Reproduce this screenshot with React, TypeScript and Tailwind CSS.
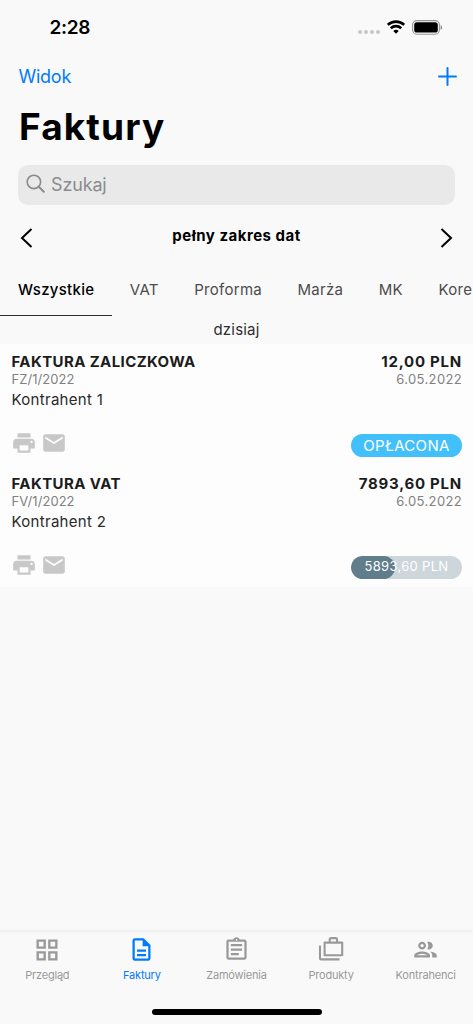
import type { ReactNode } from 'react';
import { MdEmail, MdOutlineAssignment, MdOutlineDescription, MdOutlineGridView, MdPrint } from 'react-icons/md';

type Invoice = {
  title: string;
  number: string;
  client: string;
  amount: string;
  date: string;
  status: string;
  paidPercent?: number;
};

const INVOICES: Invoice[] = [
  {
    title: 'FAKTURA ZALICZKOWA',
    number: 'FZ/1/2022',
    client: 'Kontrahent 1',
    amount: '12,00 PLN',
    date: '6.05.2022',
    status: 'OPŁACONA',
  },
  {
    title: 'FAKTURA VAT',
    number: 'FV/1/2022',
    client: 'Kontrahent 2',
    amount: '7893,60 PLN',
    date: '6.05.2022',
    status: '5893,60 PLN',
    paidPercent: 40,
  },
];

const FILTERS = ['Wszystkie', 'VAT', 'Proforma', 'Marża', 'MK', 'Kore'];

function CasesIcon() {
  return (
    <svg width="27" height="27" viewBox="0 0 27 27" fill="none" stroke="currentColor" strokeWidth="2.1" strokeLinejoin="round">
      <path d="M6.6 6.6h17.6v12.6H6.600z" />
      <path d="M11.700 6.600V3.500q0-1.400 1.400-1.400h4.600q1.400 0 1.400 1.400v3.100" />
      <path d="M2 9.500v12.900q0 1 1 1h18.600" />
    </svg>
  );
}

function PeopleIcon() {
  return (
    <svg width="27" height="27" viewBox="0 0 24 24" fill="currentColor">
      <path d="M9 13.75c-2.34 0-7 1.17-7 3.5V19h14v-1.75c0-2.33-4.66-3.5-7-3.5zM4.34 17c.84-.58 2.87-1.25 4.66-1.25s3.82.67 4.66 1.25H4.34zM9 12c1.93 0 3.5-1.57 3.5-3.5S10.93 5 9 5 5.5 6.57 5.5 8.5 7.07 12 9 12zm0-5c.83 0 1.5.67 1.5 1.5S9.83 10 9 10s-1.5-.67-1.5-1.5S8.17 7 9 7z" />
      <path d="M16.04 13.81c1.16.84 1.96 1.96 1.96 3.44V19h4v-1.75c0-2.02-3.5-3.17-5.96-3.44zM15 12c1.93 0 3.5-1.57 3.5-3.5S16.93 5 15 5c-.54 0-1.04.13-1.5.35.63.89 1 1.98 1 3.15s-.37 2.26-1 3.15c.46.22.96.35 1.5.35z" />
    </svg>
  );
}

const NAV_ITEMS: { label: string; icon: ReactNode; active?: boolean }[] = [
  { label: 'Przegląd', icon: <MdOutlineGridView size={28} /> },
  { label: 'Faktury', icon: <MdOutlineDescription size={27} />, active: true },
  { label: 'Zamówienia', icon: <MdOutlineAssignment size={27} /> },
  { label: 'Produkty', icon: <CasesIcon /> },
  { label: 'Kontrahenci', icon: <PeopleIcon /> },
];

function StatusBar() {
  return (
    <div className="flex h-[54px] shrink-0 items-center pr-[31px] pl-[49.5px]">
      <span className="pt-[2px] text-[19px] font-semibold tracking-[-0.3px]">2:28</span>
      <div className="ml-auto flex items-center">
        <div className="mt-[10px] mr-[7px] flex gap-[2px]">
          <span className="size-1 rounded-full bg-[#c7c7c7]" />
          <span className="size-1 rounded-full bg-[#c7c7c7]" />
          <span className="size-1 rounded-full bg-[#c7c7c7]" />
          <span className="size-1 rounded-full bg-[#c7c7c7]" />
        </div>
        <svg width="18" height="14" viewBox="0 0 18 14" fill="none" stroke="#000" strokeWidth="2.6">
          <path d="M.8 4.9a11.8 11.8 0 0 1 16.4 0" />
          <path d="M3.8 8.2a7.5 7.5 0 0 1 10.4 0" />
          <path d="M9 13.7 6.3 11a3.9 3.9 0 0 1 5.4 0z" fill="#000" stroke="none" />
        </svg>
        <svg className="ml-[7px]" width="30" height="15" viewBox="0 0 30 15">
          <rect x=".6" y=".6" width="26.8" height="13.6" rx="4.2" fill="none" stroke="#000" strokeOpacity=".4" strokeWidth="1.1" />
          <rect x="2.2" y="2.2" width="23.6" height="10.4" rx="2.7" />
          <path d="M28.6 5.1q1.5.8 1.5 2.3t-1.5 2.3z" fillOpacity=".45" />
        </svg>
      </div>
    </div>
  );
}

function InvoiceRow({ invoice }: { invoice: Invoice }) {
  return (
    <div className="flex h-[121.5px] justify-between bg-[#fdfdfd] pt-[8px] pr-[11px] pl-[11.5px]">
      <div>
        <p className="text-[15px] leading-[20px] font-bold tracking-[0.4px] text-[#1c1c1c]">{invoice.title}</p>
        <p className="-mt-px text-[13px] leading-[16px] tracking-[0.05px] text-[#818181]">{invoice.number}</p>
        <p className="mt-[2px] text-[15px] leading-[22px] tracking-[0.3px] text-[#2a2a2a]">{invoice.client}</p>
        <div className="mt-[19px] -ml-[0.5px] flex gap-[4px] text-[#c8c8c8]">
          <MdPrint size={26} />
          <MdEmail size={26} />
        </div>
      </div>
      <div className="flex flex-col items-end">
        <p className="text-[15px] leading-[20px] font-bold tracking-[0.75px] text-[#1c1c1c]">{invoice.amount}</p>
        <p className="-mt-px text-[13px] leading-[16px] tracking-[0.35px] text-[#818181]">{invoice.date}</p>
        {invoice.paidPercent === undefined ? (
          <div className="mt-[47px] flex h-[23px] w-[111px] items-center justify-center rounded-full bg-[#42c0fb] pt-px text-[15px] tracking-[0.3px] text-white">
            {invoice.status}
          </div>
        ) : (
          <div className="relative mt-[47px] flex h-[23px] w-[111px] items-center justify-center overflow-hidden rounded-full bg-[#cdd6db] text-[13px] tracking-[0.3px] text-white">
            <div className="absolute inset-y-0 left-0 rounded-full bg-[#5f7d8b]" style={{ width: `${invoice.paidPercent}%` }} />
            <span className="relative">{invoice.status}</span>
          </div>
        )}
      </div>
    </div>
  );
}

export default function App() {
  return (
    <div className="flex h-[1024px] w-[473px] flex-col overflow-hidden bg-[#f9f9f9] font-['Inter','Noto_Sans',sans-serif] text-black">
      <StatusBar />

      <header className="shrink-0">
        <div className="flex h-[45px] items-center justify-between pr-[16px] pl-[18.5px] text-[#007aff]">
          <button type="button" className="text-[18px] tracking-[-0.25px]">
            Widok
          </button>
          <button type="button" aria-label="Dodaj">
            <svg width="19" height="19" viewBox="0 0 19 19" stroke="currentColor" strokeWidth="2" strokeLinecap="round">
              <path d="M9.5 1v17M1 9.5h17" />
            </svg>
          </button>
        </div>
        <h1 className="h-[66px] pl-[19px] text-[37px] leading-[55px] font-bold tracking-[1.1px]">Faktury</h1>
        <div className="mx-[18px] flex h-[40px] items-center rounded-[10px] bg-[#e9e9e9] pl-[8px] text-[#8b8b8f]">
          <svg className="-mt-[3px]" width="19" height="19" viewBox="0 0 19 19" fill="none" stroke="currentColor" strokeWidth="1.6" strokeLinecap="round">
            <circle cx="7.9" cy="7.9" r="6.7" />
            <path d="m12.8 12.8 5 4.9" strokeWidth="2" />
          </svg>
          <span className="mb-px ml-[6px] text-[18px] tracking-[-0.15px]">Szukaj</span>
        </div>
      </header>

      <div className="flex h-[65px] shrink-0 items-center justify-between px-[20px]">
        <svg width="13" height="20" viewBox="0 0 13 20" fill="none" stroke="currentColor" strokeWidth="2">
          <path d="m11.5 1-9.500 9 9.500 9" />
        </svg>
        <span className="mb-[3px] text-[15px] font-bold tracking-[0.5px]">pełny zakres dat</span>
        <svg width="13" height="20" viewBox="0 0 13 20" fill="none" stroke="currentColor" strokeWidth="2">
          <path d="m1.500 1 9.500 9-9.500 9" />
        </svg>
      </div>

      <div className="flex h-[46px] shrink-0 text-[15px] tracking-[0.28px] text-[#4c4c4c]">
        {FILTERS.map((filter, index) => (
          <div
            key={filter}
            className={
              index === 0
                ? 'h-full shrink-0 border-b border-[#303030] pt-[9px] pr-[17.5px] pl-[18px] font-medium text-black'
                : 'h-full shrink-0 pt-[9px] pr-[17.5px] pl-[18px]'
            }
          >
            {filter}
          </div>
        ))}
      </div>

      <p className="h-[28px] shrink-0 text-center text-[15px] leading-[28px] tracking-[0.2px] text-[#2f2f2f]">dzisiaj</p>

      <main className="flex-1">
        {INVOICES.map((invoice) => (
          <InvoiceRow key={invoice.number} invoice={invoice} />
        ))}
      </main>

      <nav className="flex h-[94px] shrink-0 flex-col border-t-2 border-[#f1f1f1]">
        <div className="grid grid-cols-5 pt-[4px]">
          {NAV_ITEMS.map(({ label, icon, active }) => (
            <div key={label} className={active ? 'flex flex-col items-center text-[#007aff]' : 'flex flex-col items-center text-[#999999]'}>
              <div className="flex h-[27px] items-center">{icon}</div>
              <span className="mt-[4px] text-[11px] leading-[16px] tracking-[-0.2px]">{label}</span>
            </div>
          ))}
        </div>
        <div className="mx-auto mt-auto mb-[9px] h-[6px] w-[170px] rounded-full bg-black" />
      </nav>
    </div>
  );
}
